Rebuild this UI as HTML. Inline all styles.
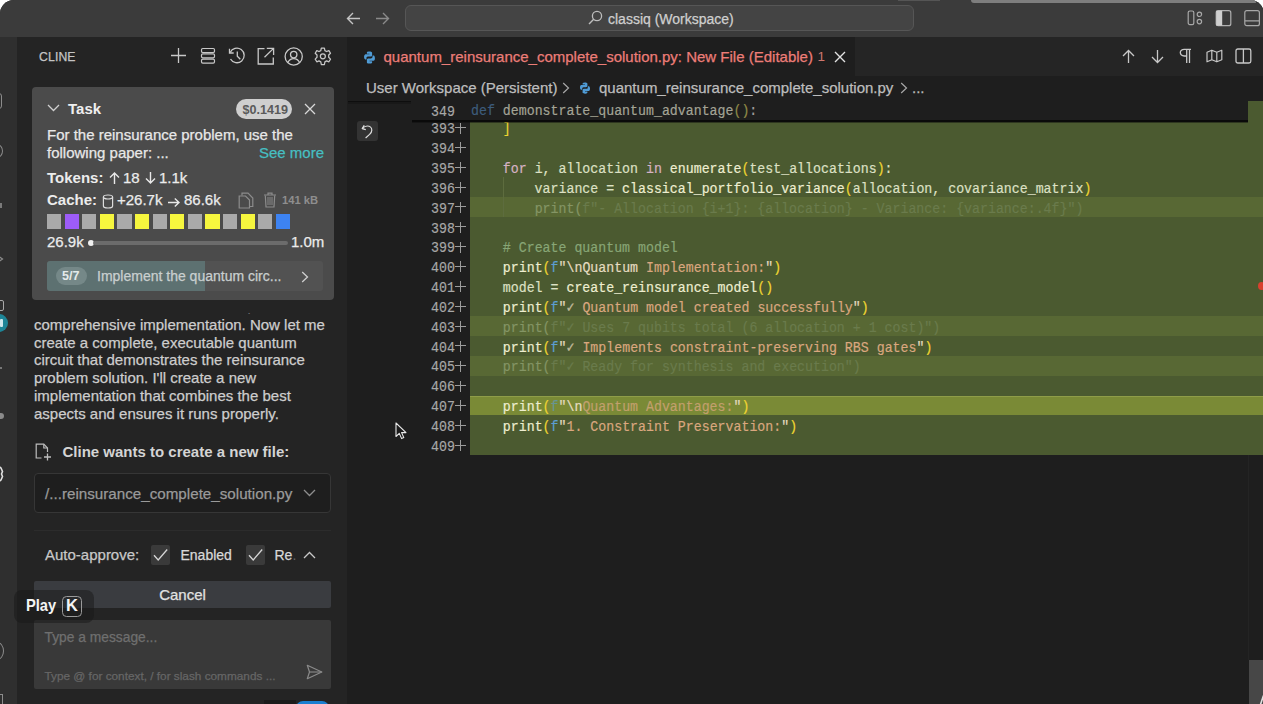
<!DOCTYPE html>
<html><head><meta charset="utf-8">
<style>
*{box-sizing:border-box;margin:0;padding:0}
html,body{width:1263px;height:704px;overflow:hidden;background:#fff}
body{font-family:"Liberation Sans",sans-serif;position:relative}
.a{position:absolute}
.t{position:absolute;white-space:pre;line-height:18px;font-size:15px;-webkit-text-stroke:0.25px currentColor}
.t.b{-webkit-text-stroke:0}
svg{position:absolute;overflow:visible}
#win{position:absolute;left:0;top:0;width:1264px;height:704px;background:#1e1e1e;border-radius:14px 14px 0 0;overflow:hidden}
.code{position:absolute;left:0;font-family:"Liberation Mono",monospace;font-size:15.5px;line-height:19.85px;white-space:pre;color:#dde0c4;transform:scaleX(0.855);transform-origin:0 0;-webkit-text-stroke:0.2px currentColor}

.kw{color:#d6b2c4}.fn{color:#eeeed0}.br{color:#efd531}.str{color:#daa77f}.esc{color:#e6dcc0}.fp{color:#5c9fd2}.cm{color:#88a676}
.fd{color:#6a7b4c}.fd1{color:#849565}
</style></head>
<body>
<div id="win">
  <!-- title bar -->
  <div class="a" style="left:0;top:0;width:1278px;height:37px;background:#3b3b3b"></div>
  
  <!-- top strips -->
  <div class="a" style="left:898px;top:0;width:42px;height:1px;background:#555"></div>
  <!-- nav arrows -->
  <svg style="left:346px;top:12px" width="15" height="13" viewBox="0 0 15 13"><path d="M14 6.5H1.5M7 1L1.5 6.5L7 12" fill="none" stroke="#c4c4c4" stroke-width="1.4"/></svg>
  <svg style="left:375px;top:12px" width="15" height="13" viewBox="0 0 15 13"><path d="M1 6.5H13.5M8 1L13.5 6.5L8 12" fill="none" stroke="#8a8a8a" stroke-width="1.4"/></svg>
  <!-- search box -->
  <div class="a" style="left:405px;top:5px;width:509px;height:26px;background:#444;border:1px solid #565656;border-radius:6px"></div>
  <svg style="left:588px;top:10px" width="15" height="15" viewBox="0 0 15 15"><circle cx="9" cy="6" r="4.6" fill="none" stroke="#bdbdbd" stroke-width="1.3"/><path d="M5.7 9.3L1 14" stroke="#bdbdbd" stroke-width="1.4"/></svg>
  <div class="t" style="left:608px;top:11px;font-size:14px;line-height:17px;color:#cfcfcf">classiq (Workspace)</div>
  <!-- title bar right icons -->
  <svg style="left:1187px;top:10px" width="16" height="16" viewBox="0 0 16 16"><rect x="1.2" y="1" width="5.6" height="13.6" rx="1.6" fill="none" stroke="#a8a8a8" stroke-width="1.2"/><circle cx="12.4" cy="4.3" r="2.2" fill="none" stroke="#a8a8a8" stroke-width="1.2"/><circle cx="12.4" cy="11.6" r="2.2" fill="none" stroke="#a8a8a8" stroke-width="1.2"/></svg>
  <svg style="left:1215px;top:10px" width="17" height="17" viewBox="0 0 17 17"><rect x="1.2" y="0.7" width="14.6" height="15" rx="2" fill="none" stroke="#b0b0b0" stroke-width="1.2"/><rect x="1.2" y="0.7" width="6" height="15" fill="#cfcfcf"/></svg>
  <svg style="left:1244px;top:10px" width="17" height="17" viewBox="0 0 17 17"><rect x="0.8" y="0.7" width="14.6" height="15" rx="2" fill="none" stroke="#a8a8a8" stroke-width="1.2"/><path d="M0.8 10.9H15.4" stroke="#a8a8a8" stroke-width="1.2"/></svg>

  <!-- activity bar -->
  <div class="a" style="left:0;top:37px;width:17px;height:667px;background:#2f2f2f"></div>
  <!-- sidebar -->
  <div class="a" style="left:17px;top:37px;width:330px;height:667px;background:#242424"></div>
  <!-- tab bar -->
  <div class="a" style="left:347px;top:37px;width:931px;height:39px;background:#252525"></div>
  <div class="a" style="left:347px;top:37px;width:508px;height:39px;background:#1e1e1e"></div>



  <div class="a" style="left:470px;top:101px;width:808px;height:354px;background:#4b5a30"></div>
  <div class="a" style="left:470px;top:197.00px;width:808px;height:19.85px;background:#586834"></div>
  <div class="a" style="left:470px;top:316.10px;width:808px;height:19.85px;background:#586834"></div>
  <div class="a" style="left:470px;top:355.80px;width:808px;height:19.85px;background:#586834"></div>
  <div class="a" style="left:470px;top:395.50px;width:808px;height:19.85px;background:#7a8a36;border-top:1px solid #8f9d48"></div>
  <div class="a" style="left:1258px;top:282px;width:7px;height:8px;border-radius:50%;background:#d8402e"></div>

  <!-- line numbers -->
  <div class="code" style="left:430.5px;top:120.3px;color:#a8a8a8">393
394
395
396
397
398
399
400
401
402
403
404
405
406
407
408
409</div>
  <div class="a" style="left:455px;top:127px;width:11px;height:1.2px;background:#9c9c9c"></div><div class="a" style="left:460px;top:123px;width:1.2px;height:10.5px;background:#9c9c9c"></div><div class="a" style="left:455px;top:147px;width:11px;height:1.2px;background:#9c9c9c"></div><div class="a" style="left:460px;top:142px;width:1.2px;height:10.5px;background:#9c9c9c"></div><div class="a" style="left:455px;top:167px;width:11px;height:1.2px;background:#9c9c9c"></div><div class="a" style="left:460px;top:162px;width:1.2px;height:10.5px;background:#9c9c9c"></div><div class="a" style="left:455px;top:187px;width:11px;height:1.2px;background:#9c9c9c"></div><div class="a" style="left:460px;top:182px;width:1.2px;height:10.5px;background:#9c9c9c"></div><div class="a" style="left:455px;top:206px;width:11px;height:1.2px;background:#9c9c9c"></div><div class="a" style="left:460px;top:202px;width:1.2px;height:10.5px;background:#9c9c9c"></div><div class="a" style="left:455px;top:226px;width:11px;height:1.2px;background:#9c9c9c"></div><div class="a" style="left:460px;top:222px;width:1.2px;height:10.5px;background:#9c9c9c"></div><div class="a" style="left:455px;top:246px;width:11px;height:1.2px;background:#9c9c9c"></div><div class="a" style="left:460px;top:242px;width:1.2px;height:10.5px;background:#9c9c9c"></div><div class="a" style="left:455px;top:266px;width:11px;height:1.2px;background:#9c9c9c"></div><div class="a" style="left:460px;top:261px;width:1.2px;height:10.5px;background:#9c9c9c"></div><div class="a" style="left:455px;top:286px;width:11px;height:1.2px;background:#9c9c9c"></div><div class="a" style="left:460px;top:281px;width:1.2px;height:10.5px;background:#9c9c9c"></div><div class="a" style="left:455px;top:306px;width:11px;height:1.2px;background:#9c9c9c"></div><div class="a" style="left:460px;top:301px;width:1.2px;height:10.5px;background:#9c9c9c"></div><div class="a" style="left:455px;top:326px;width:11px;height:1.2px;background:#9c9c9c"></div><div class="a" style="left:460px;top:321px;width:1.2px;height:10.5px;background:#9c9c9c"></div><div class="a" style="left:455px;top:345px;width:11px;height:1.2px;background:#9c9c9c"></div><div class="a" style="left:460px;top:341px;width:1.2px;height:10.5px;background:#9c9c9c"></div><div class="a" style="left:455px;top:365px;width:11px;height:1.2px;background:#9c9c9c"></div><div class="a" style="left:460px;top:361px;width:1.2px;height:10.5px;background:#9c9c9c"></div><div class="a" style="left:455px;top:385px;width:11px;height:1.2px;background:#9c9c9c"></div><div class="a" style="left:460px;top:381px;width:1.2px;height:10.5px;background:#9c9c9c"></div><div class="a" style="left:455px;top:405px;width:11px;height:1.2px;background:#9c9c9c"></div><div class="a" style="left:460px;top:400px;width:1.2px;height:10.5px;background:#9c9c9c"></div><div class="a" style="left:455px;top:425px;width:11px;height:1.2px;background:#9c9c9c"></div><div class="a" style="left:460px;top:420px;width:1.2px;height:10.5px;background:#9c9c9c"></div><div class="a" style="left:455px;top:445px;width:11px;height:1.2px;background:#9c9c9c"></div><div class="a" style="left:460px;top:440px;width:1.2px;height:10.5px;background:#9c9c9c"></div>
  <!-- code -->
  <div class="code" style="left:470.5px;top:120.3px">    <span class="br">]</span>

    <span class="kw">for</span> i, allocation <span class="kw">in</span> <span class="fn">enumerate</span><span class="br">(</span>test_allocations<span class="br">)</span>:
        variance = <span class="fn">classical_portfolio_variance</span><span class="br">(</span>allocation, covariance_matrix<span class="br">)</span>
<span class="fd">        <span class="fd1">print(</span>f"- Allocation {i+1}: {allocation} - Variance: {variance:.4f}")</span>

    <span class="cm"># Create quantum model</span>
    <span class="fn">print</span><span class="br">(</span><span class="fp">f</span><span class="esc">"\nQuantum</span><span class="str"> Implementation:</span><span class="esc">"</span><span class="br">)</span>
    model = <span class="fn">create_reinsurance_model</span><span class="br">()</span>
    <span class="fn">print</span><span class="br">(</span><span class="fp">f</span><span class="esc">"<span style="opacity:.75">✓</span></span><span class="str"> Quantum model created successfully</span><span class="esc">"</span><span class="br">)</span>
<span class="fd">    <span class="fd1">print(</span>f"✓ Uses 7 qubits total (6 allocation + 1 cost)")</span>
    <span class="fn">print</span><span class="br">(</span><span class="fp">f</span><span class="esc">"<span style="opacity:.75">✓</span></span><span class="str"> Implements constraint-preserving RBS gates</span><span class="esc">"</span><span class="br">)</span>
<span class="fd">    <span class="fd1">print(</span>f"✓ Ready for synthesis and execution")</span>

    <span class="fn">print</span><span class="br">(</span><span class="fp" style="opacity:.6">f</span><span class="esc">"\n</span><span class="str" style="opacity:.75">Quantum Advantages:</span><span class="esc">"</span><span class="br">)</span>
    <span class="fn">print</span><span class="br">(</span><span class="fp">f</span><span class="esc">"</span><span class="str">1. Constraint Preservation:</span><span class="esc">"</span><span class="br">)</span>
</div>
  <!-- indent guide -->
  <div class="a" style="left:502.5px;top:177px;width:1px;height:40px;background:#5d6c3e"></div>
  <!-- scroll shadow left -->
  <div class="a" style="left:348px;top:100.5px;width:63px;height:1.5px;background:#0e0e0e"></div><div class="a" style="left:348px;top:102px;width:63px;height:1.5px;background:rgba(14,14,14,0.4)"></div>
  <!-- sticky header -->
  <div class="a" style="left:411px;top:100px;width:837px;height:20px;background:#1e1e1e"></div><div class="a" style="left:412px;top:120px;width:836px;height:1.5px;background:#0a0a0a"></div><div class="a" style="left:412px;top:121.5px;width:836px;height:1.5px;background:rgba(10,10,10,0.45)"></div>
  <div class="code" style="left:430.5px;top:102.6px;color:#a8a8a8">349</div><div class="code" style="left:470.5px;top:102.2px;color:#a0a0a0"><span style="color:#3d5c7c">def</span> <span style="color:#a4a496">demonstrate_quantum_advantage</span><span style="color:#8e8a48">()</span><span style="color:#a0a0a0">:</span></div>
  <!-- revert button -->
  <div class="a" style="left:356.5px;top:121.3px;width:21px;height:19.5px;border-radius:3px;background:#333333"></div>
  <svg style="left:361px;top:124px" width="13" height="15" viewBox="0 0 13 15"><path d="M3.2 1.2L1.2 4.6L4.8 5.6" fill="none" stroke="#dedede" stroke-width="1.2" stroke-linejoin="round"/><path d="M1.6 4.4C3 2.6 4.6 2 6.3 2C8.9 2 10.8 3.8 10.8 6.2C10.8 8 9.8 9.2 8.6 10.4L4.6 14" fill="none" stroke="#dedede" stroke-width="1.2"/></svg>
  <!-- cursor -->
  <svg style="left:395px;top:422px" width="12" height="18" viewBox="0 0 12 18"><path d="M1 1V14.5L4.3 11.4L6.6 16.6L8.8 15.6L6.6 10.6H11Z" fill="#1b1b1b" stroke="#e8e8e8" stroke-width="1.1" stroke-linejoin="round"/></svg>
  <!-- scrollbar -->
  <div class="a" style="left:1248px;top:455px;width:1px;height:205px;background:#242424"></div><div class="a" style="left:1249px;top:660px;width:15px;height:44px;background:#474747"></div><svg style="left:1259px;top:695px" width="5" height="10" viewBox="0 0 5 10"><path d="M4.5 0.5L1.5 9.5" stroke="#e0e0e0" stroke-width="1.6"/></svg>

  <!-- ===== EDITOR ===== -->
  <svg style="left:363px;top:51px" width="13" height="13" viewBox="0 0 16 16"><path d="M7.9 0.5C4.6 0.5 4.8 1.9 4.8 1.9V3.4H8V3.9H3.5C3.5 3.9 1.3 3.7 1.3 7.1S3.2 10.4 3.2 10.4H4.3V8.8C4.3 8.8 4.2 6.9 6.2 6.9H9.4C9.4 6.9 11.2 6.9 11.2 5.1V2.2C11.2 2.2 11.5 0.5 7.9 0.5Z" fill="#4f9bd5"/><path d="M8.1 15.5C11.4 15.5 11.2 14.1 11.2 14.1V12.6H8V12.1H12.5C12.5 12.1 14.7 12.3 14.7 8.9S12.8 5.6 12.8 5.6H11.7V7.2C11.7 7.2 11.8 9.1 9.8 9.1H6.6C6.6 9.1 4.8 9.1 4.8 10.9V13.8C4.8 13.8 4.5 15.5 8.1 15.5Z" fill="#4f9bd5"/></svg>
  <div class="t" style="left:383.5px;top:47.6px;color:#ec7d78">quantum_reinsurance_complete_solution.py: New File (Editable)</div>
  <div class="t" style="left:817.5px;top:48px;font-size:13.5px;color:#cf786f;-webkit-text-stroke:0">1</div>
  <svg style="left:834px;top:51px" width="12" height="12" viewBox="0 0 12 12"><path d="M1 1L11 11M11 1L1 11" stroke="#e2e2e2" stroke-width="1.4"/></svg>
  <!-- editor actions -->
  <svg style="left:1122px;top:49px" width="13" height="15" viewBox="0 0 13 15"><path d="M6.5 14V1.5M1 7L6.5 1.5L12 7" fill="none" stroke="#c8c8c8" stroke-width="1.3"/></svg>
  <svg style="left:1151px;top:49px" width="13" height="15" viewBox="0 0 13 15"><path d="M6.5 1V13.5M1 8L6.5 13.5L12 8" fill="none" stroke="#c8c8c8" stroke-width="1.3"/></svg>
  <svg style="left:1179px;top:48px" width="13" height="16" viewBox="0 0 13 16"><path d="M6.5 1.3H12M7.7 1.3V15M10.5 1.3V15M7.7 8H5.2C3 8 1.3 6.6 1.3 4.6S3 1.3 5.2 1.3H7.7Z" fill="none" stroke="#c8c8c8" stroke-width="1.3"/></svg>
  <svg style="left:1206px;top:49px" width="17" height="14" viewBox="0 0 17 14"><path d="M1 3.2L5.8 1.2L10.8 3.2L15.8 1.2V10.8L10.8 12.8L5.8 10.8L1 12.8Z M5.8 1.2V10.8M10.8 3.2V12.8" fill="none" stroke="#c8c8c8" stroke-width="1.2" stroke-linejoin="round"/></svg>
  <svg style="left:1235px;top:48px" width="17" height="16" viewBox="0 0 17 16"><rect x="1" y="1" width="14.8" height="14" rx="1.8" fill="none" stroke="#c8c8c8" stroke-width="1.3"/><path d="M8.4 1V15" stroke="#c8c8c8" stroke-width="1.3"/></svg>
  <!-- breadcrumbs -->
  <div class="t" style="left:366px;top:78.8px;color:#bdbdbd">User Workspace (Persistent)</div>
  <svg style="left:562px;top:82px" width="8" height="12" viewBox="0 0 8 12"><path d="M1.2 1L6.5 6L1.2 11" fill="none" stroke="#a8a8a8" stroke-width="1.2"/></svg>
  <svg style="left:579px;top:82px" width="12" height="12" viewBox="0 0 16 16"><path d="M7.9 0.5C4.6 0.5 4.8 1.9 4.8 1.9V3.4H8V3.9H3.5C3.5 3.9 1.3 3.7 1.3 7.1S3.2 10.4 3.2 10.4H4.3V8.8C4.3 8.8 4.2 6.9 6.2 6.9H9.4C9.4 6.9 11.2 6.9 11.2 5.1V2.2C11.2 2.2 11.5 0.5 7.9 0.5Z" fill="#4f9bd5"/><path d="M8.1 15.5C11.4 15.5 11.2 14.1 11.2 14.1V12.6H8V12.1H12.5C12.5 12.1 14.7 12.3 14.7 8.9S12.8 5.6 12.8 5.6H11.7V7.2C11.7 7.2 11.8 9.1 9.8 9.1H6.6C6.6 9.1 4.8 9.1 4.8 10.9V13.8C4.8 13.8 4.5 15.5 8.1 15.5Z" fill="#4f9bd5"/></svg>
  <div class="t" style="left:599px;top:78.8px;color:#bdbdbd">quantum_reinsurance_complete_solution.py</div>
  <svg style="left:900px;top:82px" width="8" height="12" viewBox="0 0 8 12"><path d="M1.2 1L6.5 6L1.2 11" fill="none" stroke="#a8a8a8" stroke-width="1.2"/></svg>
  <div class="t" style="left:912px;top:78.8px;color:#bdbdbd">...</div>


  <!-- activity bar fragments -->
  <div class="a" style="left:-8px;top:93px;width:10px;height:16px;border:1.3px solid #8c8c8c;border-radius:3px"></div>
  <div class="a" style="left:-9px;top:144px;width:12px;height:14px;border:1.3px solid #8c8c8c;border-radius:50%"></div>
  <div class="a" style="left:0;top:203px;width:1.5px;height:5px;background:#7a7a7a"></div>
  <svg style="left:-4px;top:254px" width="8" height="10" viewBox="0 0 8 10"><path d="M1 1L6.5 5L1 9" fill="none" stroke="#8c8c8c" stroke-width="1.3"/></svg>
  <div class="a" style="left:-8px;top:300px;width:11.5px;height:10.5px;border:1.3px solid #a8a8a8;border-radius:2px"></div>
  <div class="a" style="left:-10px;top:314px;width:18px;height:18px;border-radius:50%;background:#1d8597"></div>
  <div class="a" style="left:0;top:319px;width:3px;height:8px;border-radius:1px;background:#cfe8ee"></div>
  <div class="a" style="left:0;top:367px;width:2px;height:2px;background:#777"></div>
  <div class="a" style="left:-2px;top:413px;width:6px;height:6px;border-radius:50%;background:#8a8a8a"></div>
  <svg style="left:-8px;top:465px" width="12" height="18" viewBox="0 0 12 18"><path d="M6 1L9 3L10.5 6.5L9.5 9L10.5 11.5L9 15L6 17" fill="none" stroke="#e0e0e0" stroke-width="1.6"/></svg>
  <div class="a" style="left:-10px;top:642px;width:13.5px;height:18px;border:1.3px solid #8c8c8c;border-radius:50%"></div>
  <div class="a" style="left:0;top:694px;width:3px;height:10px;border-top:1.3px solid #8c8c8c;border-right:1.3px solid #8c8c8c"></div>

  <!-- ===== SIDEBAR CONTENT ===== -->
  <div class="t" style="left:39px;top:49px;font-size:12.2px;line-height:16px;letter-spacing:0.15px;color:#c4c4c4">CLINE</div>
  <svg style="left:170px;top:47px" width="17" height="17" viewBox="0 0 17 17"><path d="M8.5 1V16M1 8.5H16" stroke="#c8c8c8" stroke-width="1.3"/></svg>
  <svg style="left:200px;top:47px" width="17" height="18" viewBox="0 0 17 18"><rect x="1.5" y="1.5" width="13" height="4" rx="1.3" fill="none" stroke="#c8c8c8" stroke-width="1.2"/><rect x="1.5" y="6.8" width="13" height="4" rx="1.3" fill="none" stroke="#c8c8c8" stroke-width="1.2"/><rect x="1.5" y="12.1" width="13" height="4" rx="1.3" fill="none" stroke="#c8c8c8" stroke-width="1.2"/></svg>
  <svg style="left:228px;top:47px" width="18" height="18" viewBox="0 0 18 18"><path d="M2.2 5.5A7.3 7.3 0 1 1 2.5 12" fill="none" stroke="#c8c8c8" stroke-width="1.3"/><path d="M1.5 1.8V6H5.7" fill="none" stroke="#c8c8c8" stroke-width="1.3"/><path d="M9.3 4.6V9.3L12.3 12.3" fill="none" stroke="#c8c8c8" stroke-width="1.3"/></svg>
  <svg style="left:257px;top:47px" width="18" height="18" viewBox="0 0 18 18"><path d="M7.5 1.6H1.2V17H16.3V10.5" fill="none" stroke="#c8c8c8" stroke-width="1.3"/><path d="M9.8 1.3H16.6V8.1M16.3 1.6L7.5 10.3" fill="none" stroke="#c8c8c8" stroke-width="1.3"/></svg>
  <svg style="left:284px;top:47px" width="20" height="20" viewBox="0 0 20 20"><circle cx="9.7" cy="9.5" r="8.6" fill="none" stroke="#c8c8c8" stroke-width="1.3"/><circle cx="9.7" cy="7.6" r="3.2" fill="none" stroke="#c8c8c8" stroke-width="1.3"/><path d="M3.8 15.6C5.2 12.6 7.3 11.6 9.7 11.6S14.2 12.6 15.6 15.6" fill="none" stroke="#c8c8c8" stroke-width="1.3"/></svg>
  <svg style="left:313px;top:47px" width="20" height="20" viewBox="0 0 20 20"><path d="M8.3 1.2H11.4L11.9 3.6L13.6 4.5L15.9 3.6L17.5 6.3L15.7 8V10.3L17.5 12.1L15.9 14.8L13.6 13.9L11.9 14.9L11.4 17.5H8.3L7.8 14.9L6 13.9L3.8 14.8L2.2 12.1L4 10.3V8L2.2 6.3L3.8 3.6L6 4.5L7.8 3.6Z" fill="none" stroke="#c8c8c8" stroke-width="1.25" stroke-linejoin="round"/><circle cx="9.85" cy="9.3" r="2.5" fill="none" stroke="#c8c8c8" stroke-width="1.25"/></svg>

  <!-- task card -->
  <div class="a" style="left:32px;top:87px;width:302px;height:213px;background:#4b4b4b;border-radius:4px"></div>
  <svg style="left:47px;top:104px" width="13" height="8" viewBox="0 0 13 8"><path d="M1 1L6.5 6.5L12 1" fill="none" stroke="#d0d0d0" stroke-width="1.3"/></svg>
  <div class="t b" style="left:68px;top:100.4px;font-weight:bold;color:#efefef">Task</div>
  <div class="a" style="left:236px;top:99px;width:56px;height:20px;border-radius:10px;background:#cfcfcf"></div>
  <div class="t b" style="left:242.5px;top:101.5px;font-size:12.6px;line-height:16px;font-weight:bold;color:#5a5a5a">$0.1419</div>
  <svg style="left:304px;top:103px" width="12" height="12" viewBox="0 0 12 12"><path d="M1 1L11 11M11 1L1 11" stroke="#d8d8d8" stroke-width="1.3"/></svg>
  <div class="t" style="left:47px;top:125.5px;color:#e8e8e8">For the reinsurance problem, use the</div>
  <div class="t" style="left:47px;top:143.9px;color:#e8e8e8">following paper: ...</div>
  <div class="t" style="left:259px;top:143.9px;color:#46bfc2">See more</div>
  <div class="t b" style="left:47px;top:168.5px;color:#ececec;font-weight:bold">Tokens:</div>
  <svg style="left:108.5px;top:172px" width="11" height="12" viewBox="0 0 11 12"><path d="M5.5 12V1M1 5.5L5.5 1L10 5.5" fill="none" stroke="#e8e8e8" stroke-width="1.4"/></svg>
  <div class="t" style="left:123px;top:168.5px;color:#ececec">18</div>
  <svg style="left:144.5px;top:172px" width="11" height="12" viewBox="0 0 11 12"><path d="M5.5 0V11M1 6.5L5.5 11L10 6.5" fill="none" stroke="#e8e8e8" stroke-width="1.4"/></svg>
  <div class="t" style="left:159px;top:168.5px;color:#ececec">1.1k</div>
  <div class="t b" style="left:47px;top:191.4px;color:#ececec;font-weight:bold">Cache:</div>
  <div class="t" style="left:117px;top:191.4px;color:#ececec">+26.7k</div>
  <svg style="left:168px;top:197.5px" width="12" height="9" viewBox="0 0 12 9"><path d="M0 4.5H11M6.8 0.5L11 4.5L6.8 8.5" fill="none" stroke="#e8e8e8" stroke-width="1.4"/></svg>
  <div class="t" style="left:184px;top:191.4px;color:#ececec">86.6k</div>
  <svg style="left:101.5px;top:194px" width="12" height="15" viewBox="0 0 12 15"><ellipse cx="6" cy="3" rx="4.6" ry="2" fill="none" stroke="#dcdcdc" stroke-width="1.2"/><path d="M1.4 3V12C1.4 13.2 3.4 14 6 14S10.6 13.2 10.6 12V3" fill="none" stroke="#dcdcdc" stroke-width="1.2"/></svg>
  <svg style="left:238px;top:192px" width="16" height="17" viewBox="0 0 16 17"><path d="M4 3.5V1.2H10L14.8 6V14.5H11.5" fill="none" stroke="#8c8c8c" stroke-width="1.2"/><path d="M1.2 4H7.5L11.5 8V16H1.2Z" fill="none" stroke="#8c8c8c" stroke-width="1.2"/></svg>
  <svg style="left:263px;top:192px" width="14" height="16" viewBox="0 0 14 16"><path d="M1 3H13M5 3V1.2H9V3" fill="none" stroke="#8c8c8c" stroke-width="1.2"/><path d="M2.3 3.5L3 15H11L11.7 3.5" fill="none" stroke="#8c8c8c" stroke-width="1.2"/><rect x="4" y="5" width="6" height="8" fill="#6a6a6a"/></svg>
  <div class="t b" style="left:282px;top:193px;font-size:11.2px;line-height:14px;font-weight:bold;color:#8e8e8e">141 kB</div>
  <!-- squares -->
  <div class="a" style="left:47px;top:214px;height:15px;width:250px">
  </div>
  <div class="a" style="left:47.0px;top:214.3px;width:14.3px;height:14.8px;background:#aaaaaa"></div><div class="a" style="left:64.6px;top:214.3px;width:14.3px;height:14.8px;background:#9d5cf8"></div><div class="a" style="left:82.2px;top:214.3px;width:14.3px;height:14.8px;background:#aaaaaa"></div><div class="a" style="left:99.8px;top:214.3px;width:14.3px;height:14.8px;background:#f6f63e"></div><div class="a" style="left:117.4px;top:214.3px;width:14.3px;height:14.8px;background:#aaaaaa"></div><div class="a" style="left:135.0px;top:214.3px;width:14.3px;height:14.8px;background:#f6f63e"></div><div class="a" style="left:152.6px;top:214.3px;width:14.3px;height:14.8px;background:#aaaaaa"></div><div class="a" style="left:170.2px;top:214.3px;width:14.3px;height:14.8px;background:#f6f63e"></div><div class="a" style="left:187.8px;top:214.3px;width:14.3px;height:14.8px;background:#aaaaaa"></div><div class="a" style="left:205.4px;top:214.3px;width:14.3px;height:14.8px;background:#f6f63e"></div><div class="a" style="left:223.0px;top:214.3px;width:14.3px;height:14.8px;background:#aaaaaa"></div><div class="a" style="left:240.6px;top:214.3px;width:14.3px;height:14.8px;background:#f6f63e"></div><div class="a" style="left:258.2px;top:214.3px;width:14.3px;height:14.8px;background:#aaaaaa"></div><div class="a" style="left:275.8px;top:214.3px;width:14.3px;height:14.8px;background:#3d83f2"></div>
  <div class="t" style="left:47px;top:233.3px;color:#ececec">26.9k</div>
  <div class="a" style="left:87.5px;top:239.5px;width:6px;height:6px;border-radius:3px;background:#f0f0f0"></div>
  <div class="a" style="left:93px;top:240.5px;width:195px;height:4px;border-radius:2px;background:#6c6c6c"></div>
  <div class="t" style="left:291px;top:233.3px;color:#ececec">1.0m</div>
  <!-- task progress -->
  <div class="a" style="left:47px;top:261px;width:276px;height:30px;border-radius:3px;background:#525252;overflow:hidden"><div class="a" style="left:0;top:0;width:158px;height:30px;background:#5d7171"></div></div>
  <div class="a" style="left:56px;top:267px;width:31px;height:17.5px;border-radius:9px;background:#758888"></div>
  <div class="t b" style="left:62px;top:268px;font-size:12.5px;line-height:16px;font-weight:bold;color:#e4eaea">5/7</div>
  <div class="t" style="left:97px;top:267.7px;font-size:14px;line-height:17px;color:#c9cfcf">Implement the quantum circ...</div>
  <svg style="left:301px;top:271px" width="8" height="12" viewBox="0 0 8 12"><path d="M1.2 1L6.5 6L1.2 11" fill="none" stroke="#cfcfcf" stroke-width="1.3"/></svg>

  <!-- paragraph -->
  <div class="a" style="left:248px;top:311px;width:3px;height:3px;color:#bbb;font-size:8px">&#180;</div>
  <div class="t" style="left:34px;top:315.8px;line-height:17.8px;color:#cdcdcd">comprehensive implementation. Now let me
create a complete, executable quantum
circuit that demonstrates the reinsurance
problem solution. I'll create a new
implementation that combines the best
aspects and ensures it runs properly.</div>

  <!-- cline wants -->
  <svg style="left:35px;top:443px" width="17" height="18" viewBox="0 0 17 18"><path d="M6.5 15H1.2V1.2H8.8L12.5 5V9" fill="none" stroke="#bdbdbd" stroke-width="1.2"/><path d="M8.8 1.2V5H12.5" fill="none" stroke="#bdbdbd" stroke-width="1.2"/><path d="M12.5 10.5V17.5M9 14H16" stroke="#bdbdbd" stroke-width="1.3"/></svg>
  <div class="t b" style="left:62.5px;top:442.5px;font-weight:bold;color:#d4d4d4">Cline wants to create a new file:</div>
  <div class="a" style="left:34px;top:473px;width:297px;height:39.5px;background:#1e1e1e;border:1px solid #363636;border-radius:4px"></div>
  <div class="t" style="left:45px;top:484.7px;font-size:15.2px;color:#9a9a9a">/...reinsurance_complete_solution.py</div>
  <svg style="left:303px;top:489px" width="13" height="8" viewBox="0 0 13 8"><path d="M1 1L6.5 6.5L12 1" fill="none" stroke="#8e8e8e" stroke-width="1.3"/></svg>
  <div class="a" style="left:34px;top:530px;width:297px;height:1px;background:#2c2c2c"></div>

  <!-- auto approve -->
  <div class="t" style="left:45px;top:545.8px;color:#c8c8c8">Auto-approve:</div>
  <div class="a" style="left:151px;top:545px;width:19px;height:19.5px;border-radius:2px;background:#3a3a3a"></div>
  <svg style="left:152px;top:548px" width="17" height="14" viewBox="0 0 17 14"><path d="M2 7.2L6.2 12L15.2 1.5" fill="none" stroke="#d6d6d6" stroke-width="1.3"/></svg>
  <div class="t" style="left:180.5px;top:545.8px;font-size:14px;line-height:18px;color:#d8d8d8">Enabled</div>
  <div class="a" style="left:246px;top:545px;width:19px;height:19.5px;border-radius:2px;background:#3a3a3a"></div>
  <svg style="left:247px;top:548px" width="17" height="14" viewBox="0 0 17 14"><path d="M2 7.2L6.2 12L15.2 1.5" fill="none" stroke="#d6d6d6" stroke-width="1.3"/></svg>
  <div class="t" style="left:274.5px;top:545.8px;font-size:14px;color:#d8d8d8">Re<span style="color:#666;-webkit-text-stroke:0">.</span></div>
  <svg style="left:303px;top:551px" width="13" height="8" viewBox="0 0 13 8"><path d="M1 7L6.5 1.5L12 7" fill="none" stroke="#c8c8c8" stroke-width="1.3"/></svg>

  <!-- cancel -->
  <div class="a" style="left:34px;top:581px;width:297px;height:27px;background:#3a3c40;border-radius:2px"></div>
  <div class="t" style="left:34px;top:585.5px;width:297px;text-align:center;color:#e2e2e2">Cancel</div>

  <!-- input -->
  <div class="a" style="left:34px;top:619.5px;width:297px;height:69px;background:#393939;border-radius:2px"></div>
  <div class="t" style="left:44.5px;top:629.4px;font-size:13.8px;color:#6f6f6f">Type a message...</div>
  <div class="t" style="left:44.5px;top:668.5px;font-size:11.8px;line-height:14px;color:#666">Type @ for context, / for slash commands ...</div>
  <svg style="left:306px;top:664px" width="17" height="16" viewBox="0 0 17 16"><path d="M1.3 1.3L15.8 8L1.3 14.7L3.5 8Z" fill="none" stroke="#8a8a8a" stroke-width="1.2" stroke-linejoin="round"/><path d="M3.5 8H15.8" stroke="#8a8a8a" stroke-width="1.1"/></svg>
  <div class="a" style="left:264px;top:700px;width:32px;height:4px;background:#1b1b1b"></div>
  <div class="a" style="left:296px;top:700.5px;width:33px;height:10px;border-radius:7px 7px 0 0;background:#1a7fd0"></div>

  <!-- play tooltip -->
  <div class="a" style="left:14px;top:590px;width:80px;height:33px;background:rgba(23,23,23,0.5);border-radius:8px"></div>
  <div class="t b" style="left:25.8px;top:596.2px;font-size:16.5px;line-height:19px;font-weight:bold;color:#f4f4f4;transform:scaleX(0.89);transform-origin:0 0">Play</div>
  <div class="a" style="left:62px;top:596px;width:20px;height:21px;border:1px solid #9a9a9a;border-radius:4.5px"></div>
  <div class="t b" style="left:62px;top:596.4px;width:20px;text-align:center;font-size:16.5px;line-height:19px;font-weight:bold;color:#f4f4f4">K</div>

</div>

<div class="a" style="left:971px;top:0;width:285px;height:2.8px;background:#7e7e7e;border-radius:0 3px 0 3px;z-index:5"></div>
</body></html>
